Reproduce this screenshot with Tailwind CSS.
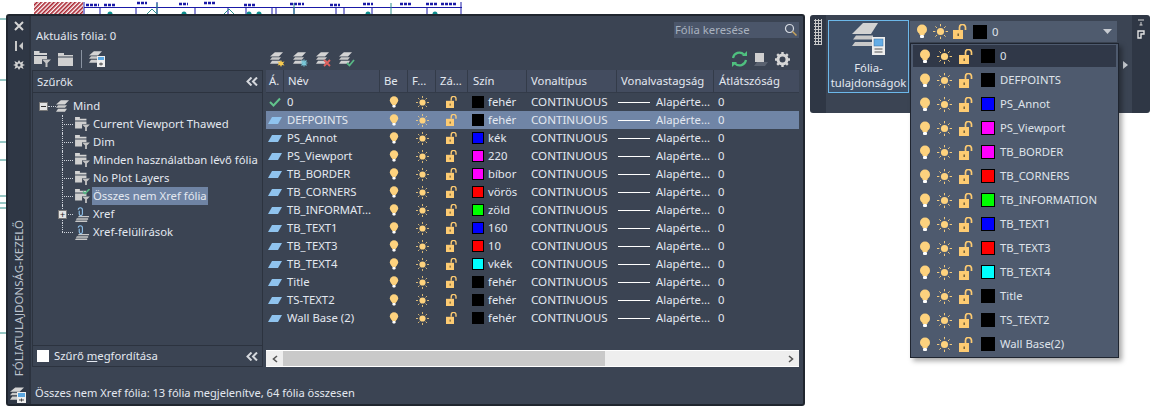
<!DOCTYPE html>
<html lang="en">
  <head>
    <meta charset="UTF-8" />
    <title>Fóliatulajdonság-kezelő</title>
    <script src="https://cdn.jsdelivr.net/npm/@tailwindcss/browser@4"></script>
  </head>
  <body class="bg-white font-['Noto_Sans',sans-serif] text-[11.3px] leading-[18px] text-[#e3e8f0] antialiased">
    <!-- Icon sprites -->
    <svg width="0" height="0" class="absolute">
      <defs>
        <pattern id="hatch" width="3" height="3" patternUnits="userSpaceOnUse" patternTransform="rotate(45)">
          <rect width="3" height="3" fill="#fff" />
          <rect width="1.6" height="3" fill="#a8202c" />
        </pattern>
        <symbol id="bulb" viewBox="0 0 12 15">
          <circle cx="6" cy="5.5" r="5" fill="#fdd27e" />
          <rect x="3.5" y="9" width="5" height="2" fill="#fdd27e" />
          <rect x="4" y="11" width="4" height="3" rx="1" fill="#fff" />
        </symbol>
        <symbol id="sun" viewBox="0 0 16 16">
          <circle cx="8" cy="8" r="3.8" fill="#fdd27e" />
          <path d="M8 0v2.5M8 13.5V16M0 8h2.5M13.5 8H16M2.5 2.5l1.7 1.7M11.8 11.8l1.7 1.7M2.5 13.5l1.7-1.7M11.8 4.2l1.7-1.7" stroke="#fdd27e" stroke-width="1" />
        </symbol>
        <symbol id="lock" viewBox="0 0 15 15">
          <rect x="0" y="6" width="10" height="9" fill="#fdcb72" />
          <rect x="4.5" y="9.5" width="1.4" height="2.5" fill="#6b5a35" />
          <path d="M6.5 6V3.5a3 3 0 0 1 6 0V6" fill="none" stroke="#fdcb72" stroke-width="1.7" />
        </symbol>
        <symbol id="stack" viewBox="0 0 16 14">
          <path d="M6 0h10l-5 5H0z" fill="#d4d4d4" />
          <path d="M2.500 6h11L11 9H0z" fill="#c8c8c8" />
          <path d="M2.500 10.500h11L11 14H0z" fill="#d0d0d0" />
        </symbol>
        <symbol id="filter" viewBox="0 0 17 16">
          <path d="M0 0h5.500v2H13v2H0z" fill="#d4d4d4" />
          <path d="M0 5h13v3H8v5H0z" fill="#cfcfcf" />
          <path d="M8 8.500h9l-3.500 3.500v4h-2v-4z" fill="#c4c4c4" />
        </symbol>
        <symbol id="xref" viewBox="0 0 16 16">
          <path d="M4 9.500h11v1.500H3zM2 12h12v1.500H1zM1 14.500h12V16H0z" fill="#c8c8c8" />
          <path d="M3.500 3a2.200 2.200 0 0 1 4.400 0v4.500a1.700 1.700 0 0 1-3.400 0V4" fill="none" stroke="#8fc1ea" stroke-width="1.200" />
        </symbol>
        <symbol id="chevrons" viewBox="0 0 12 9">
          <path d="M5.500.5L1.500 4.500l4 4M11 .5l-4 4 4 4" fill="none" stroke="#d5d8dd" stroke-width="2" />
        </symbol>
      </defs>
    </svg>

    <div class="relative w-[1165px] h-[412px] overflow-hidden bg-white">
      <!-- Drawing behind the palettes -->
      <svg class="absolute inset-0" width="1165" height="412">
        <rect x="34" y="2" width="49" height="12" fill="url(#hatch)" />
        <g stroke="#1a1aa6" fill="none">
          <path d="M84 7.500H462M84 2v12M100 7v7M136 7v7M157 2v12M195 7v7M228 7v7M246 7v7M272 7v7M276 7v7M294 7v7M336 7v7M344 7v7M372 7v7M427 7v7M461 2v12" />
          <path d="M86 5h13M104 5h11M137 3h10M179 4h9M204 3h11M244 5h12M290 4h14M330 5h10M363 4h10M400 4h11M426 4h11M441 4h16" stroke-width="2.500" stroke-dasharray="3 1" />
        </g>
        <g stroke="#2f8f8a" fill="none">
          <path d="M157 3v11M294 3v11M391 3v11M0 19h6M0 80h6M0 142h6M0 160h6M0 196h6M0 203h6M0 208h6M0 333h6" />
          <path d="M147 14l5-5 5 5M224 14l5-5 5 5" />
        </g>
        <g fill="#0d8f8f">
          <circle cx="110" cy="14" r="2.500" />
          <circle cx="184" cy="14" r="2.500" />
          <circle cx="249" cy="14" r="2.500" />
          <circle cx="259" cy="14" r="2.500" />
          <circle cx="368" cy="14" r="2.500" />
          <circle cx="435" cy="14" r="2.500" />
        </g>
      </svg>

      <!-- Layer properties manager palette -->
      <section class="absolute left-[6px] top-[14px] w-[799px] h-[392px] flex rounded-[3px] border-2 border-[#20262f] bg-[#3b4453]">
        <!-- Title strip -->
        <aside class="w-[21px] shrink-0 flex flex-col items-center bg-[#2f3745] text-[#cfd4dc]">
          <svg class="mt-[5px]" width="10" height="10" viewBox="0 0 10 10"><path d="M1 1l8 8M9 1l-8 8" stroke="#d5d5d5" stroke-width="2" /></svg>
          <svg class="mt-[10px]" width="10" height="10" viewBox="0 0 10 10"><rect x="1" y="0" width="2" height="10" fill="#c8c8c8" /><path d="M9 1v8L5 5z" fill="#c8c8c8" /></svg>
          <svg class="mt-[8px]" width="12" height="12" viewBox="0 0 12 12"><path d="M6 1l1.500 2.500L10.500 2 9.500 5 12 6 9.500 7l1 3-3-1.500L6 11 4.500 8.500 1.500 10l1-3L0 6l2.500-1-1-3 3 1.500z" fill="#d0d0d0" /><circle cx="6" cy="6" r="1.500" fill="#2f3745" /></svg>
          <div class="mt-auto mb-[10px] [writing-mode:vertical-rl] rotate-180 text-[11.500px] whitespace-nowrap text-[#bcc3ce]">FÓLIATULAJDONSÁG-KEZELŐ</div>
          <svg class="mb-[1px]" width="17" height="17" viewBox="0 0 17 17">
            <use href="#stack" x="0" y="1" width="14" height="13" />
            <rect x="7" y="6" width="9" height="11" fill="#eee" />
            <rect x="8" y="7" width="7" height="4" fill="#5aa6e0" />
            <path d="M9 14h5M11.500 12.500v3" stroke="#444" />
          </svg>
        </aside>

        <!-- Main content -->
        <div class="flex-1 min-w-0 flex flex-col border-l-2 border-[#2c333f]">
          <header class="h-[32px] shrink-0 flex items-end justify-between pl-[5px] pr-[4px] pb-[3px]">
            <span>Aktuális fólia: 0</span>
            <div class="relative w-[125px] h-[16px] mb-[7px] bg-[#4b566a] pl-px text-[#a9b2bf] leading-[16px]">
              Fólia keresése
              <svg class="absolute right-[1px] top-[1px]" width="14" height="14" viewBox="0 0 14 14"><circle cx="5.500" cy="5.500" r="4" fill="none" stroke="#d7dce3" stroke-width="1.200" /><path d="M8.500 8.500l4 4" stroke="#c9a35a" stroke-width="1.500" /></svg>
            </div>
          </header>

          <div class="h-[22px] shrink-0 flex items-center pl-[3px] pr-[4px]">
            <svg width="17" height="16"><use href="#filter" width="17" height="16" /></svg>
            <svg class="ml-[7px]" width="15" height="13" viewBox="0 0 15 13"><path d="M0 0h6v2h9v1.500H0zM0 4.500h15V13H0z" fill="#d0d0d0" /></svg>
            <div class="ml-[8px] w-px h-[18px] bg-[#8a93a1]"></div>
            <svg class="ml-[7px]" width="17" height="17" viewBox="0 0 17 17">
              <use href="#stack" x="0" y="0" width="13" height="12" />
              <rect x="8" y="5" width="8" height="11" fill="#eee" />
              <rect x="9" y="6" width="6" height="3" fill="#5aa6e0" />
              <path d="M10 13h4M12 11.500v3" stroke="#444" />
            </svg>
            <!-- New / delete / set current -->
            <div class="ml-[164px] flex items-center gap-[7px]">
              <svg width="16" height="15" viewBox="0 0 16 15"><use href="#stack" width="13" height="12" /><path d="M11 8l1 2 2.500-.5L13 11.500l1.500 2-2.500-.5-1 2-1-2-2.500.5L9 11.500 7.500 9.500l2.500.5z" fill="#f5c94f" /></svg>
              <svg width="16" height="15" viewBox="0 0 16 15"><use href="#stack" width="13" height="12" /><path d="M11 7.500v7M7.500 11h7M8.500 8.500l5 5M13.500 8.500l-5 5" stroke="#79c8d8" stroke-width="1.200" /></svg>
              <svg width="16" height="15" viewBox="0 0 16 15"><use href="#stack" width="13" height="12" /><path d="M8 8l6 6M14 8l-6 6" stroke="#e2625e" stroke-width="1.800" /></svg>
              <svg width="16" height="15" viewBox="0 0 16 15"><use href="#stack" width="13" height="12" /><path d="M8 11l2.500 2.500L15 8" fill="none" stroke="#58b784" stroke-width="1.800" /></svg>
            </div>
            <div class="ml-auto flex items-center gap-[6px] mr-[9px]">
              <svg width="17" height="16" viewBox="0 0 17 16"><path d="M2 7a6.500 6.500 0 0 1 11-3.500M15 9a6.500 6.500 0 0 1-11 3.500" fill="none" stroke="#4fc07f" stroke-width="2.200" /><path d="M11 5h5V0zM6 11H1v5z" fill="#4fc07f" /></svg>
              <svg width="15" height="15" viewBox="0 0 15 15"><rect x="1" y="1" width="9" height="9" fill="#cfcfcf" /><path d="M3 10h11l-3 4H0z" fill="#5a6270" /></svg>
              <svg width="15" height="15" viewBox="0 0 15 15"><circle cx="7.500" cy="7.500" r="4.500" fill="none" stroke="#d6d6d6" stroke-width="3" /><path d="M7.500 0v3M7.500 12v3M0 7.500h3M12 7.500h3M2.200 2.200l2 2M10.800 10.800l2 2M2.200 12.800l2-2M10.800 4.200l2-2" stroke="#d6d6d6" stroke-width="2.400" /></svg>
            </div>
          </div>

          <div class="h-[298px] shrink-0 flex">
            <!-- Filter tree -->
            <div class="ml-[1px] w-[231px] h-[297px] shrink-0 flex flex-col border border-[#2c333f]">
              <div class="h-[22px] shrink-0 flex items-center justify-between pl-[4px] pr-[4px] border-b border-[#2c333f]">
                <span>Szűrők</span>
                <svg width="12" height="9"><use href="#chevrons" width="12" height="9" /></svg>
              </div>
              <div id="tree" class="flex-1 pt-[4px]"></div>
              <div class="h-[21px] shrink-0 flex items-center justify-between pl-[4px] pr-[4px] border-t border-[#2c333f]">
                <label class="flex items-center gap-[5px]">
                  <span class="w-[12px] h-[12px] bg-white"></span>
                  <span>Szűrő <u>m</u>egfordítása</span>
                </label>
                <svg width="12" height="9"><use href="#chevrons" width="12" height="9" /></svg>
              </div>
            </div>

            <!-- Layer table -->
            <div class="ml-[3px] w-[533px] shrink-0 flex flex-col">
              <div class="h-[23px] shrink-0 flex bg-[#434c5f] border-b border-[#333b49] leading-[22px]">
                <div class="w-[18px] pl-[3px] border-r border-[#333b49]">Á.</div>
                <div class="w-[96px] pl-[4px] border-r border-[#333b49]">Név</div>
                <div class="w-[28px] pl-[4px] border-r border-[#333b49]">Be</div>
                <div class="w-[28px] pl-[4px] border-r border-[#333b49]">F...</div>
                <div class="w-[32px] pl-[4px] border-r border-[#333b49]">Zá...</div>
                <div class="w-[59px] pl-[5px] border-r border-[#333b49]">Szín</div>
                <div class="w-[90px] pl-[4px] border-r border-[#333b49]">Vonaltípus</div>
                <div class="w-[97px] pl-[4px] border-r border-[#333b49]">Vonalvastagság</div>
                <div class="flex-1 pl-[5px]">Átlátszóság</div>
              </div>
              <div id="rows" class="h-[257px] shrink-0"></div>
              <!-- Horizontal scrollbar -->
              <div class="h-[17px] shrink-0 flex bg-[#eeeeee] border-y border-white">
                <div class="w-[17px] flex items-center justify-center">
                  <svg width="6" height="8" viewBox="0 0 6 8"><path d="M5 1L1.500 4 5 7" fill="none" stroke="#555" stroke-width="1.600" /></svg>
                </div>
                <div class="w-[322px] bg-[#c9c9c9]"></div>
                <div class="flex-1"></div>
                <div class="w-[17px] flex items-center justify-center">
                  <svg width="6" height="8" viewBox="0 0 6 8"><path d="M1 1l3.500 3L1 7" fill="none" stroke="#555" stroke-width="1.600" /></svg>
                </div>
              </div>
            </div>
          </div>

          <footer class="flex-1 flex items-end pl-[4px] pb-[2px] text-[11.1px]">
            Összes nem Xref fólia: 13 fólia megjelenítve, 64 fólia összesen
          </footer>
        </div>
      </section>

      <!-- Ribbon panel -->
      <section class="absolute left-[810px] top-[15px] w-[340px] h-[98px] flex rounded-[3px] bg-[#2f3745]">
        <div class="w-[16px] shrink-0 pt-[4px] pl-[4px]">
          <div class="w-[8px] h-[26px] bg-[radial-gradient(#c8c8c8_1px,transparent_1.200px)] bg-[length:3px_3px]"></div>
        </div>
        <div class="w-[306px] shrink-0 bg-[#3b4453] pl-[2px] pt-[5px] flex items-start">
          <button class="w-[81px] h-[73px] flex flex-col items-center border border-[#6cb8ea] bg-[#3f5068] leading-[15px]">
            <svg class="mt-[2px] mb-[3px]" width="34" height="34" viewBox="0 0 34 34">
              <path d="M11 0h15l-7 11H0z" fill="#d2d2d2" />
              <path d="M4 12.500h17v4H1zM3 19h17v4H0z" fill="#c8c8c8" />
              <rect x="20" y="14" width="13" height="18" fill="#eeeeee" />
              <rect x="22" y="16" width="9" height="7" fill="#64ade6" stroke="#3b6f9e" stroke-width=".5" />
              <path d="M22.500 26h8M22.500 29h8" stroke="#555" />
            </svg>
            <span>Fólia-</span>
            <span>tulajdonságok</span>
          </button>
          <div class="ml-[1px] mt-px w-[207px] h-[21px] flex items-center bg-[#4f5b6e] pl-[6px]">
            <svg width="12" height="15"><use href="#bulb" width="12" height="15" /></svg>
            <svg class="ml-[5px]" width="15" height="15"><use href="#sun" width="15" height="15" /></svg>
            <svg class="ml-[5px]" width="15" height="15"><use href="#lock" width="15" height="15" /></svg>
            <span class="ml-[5px] w-[14px] h-[14px] bg-black"></span>
            <span class="ml-[5px] text-[#dfe3ea]">0</span>
            <svg class="ml-auto mr-[5px]" width="9" height="5" viewBox="0 0 9 5"><path d="M0 0h9L4.500 5z" fill="#c8ccd2" /></svg>
          </div>
          <svg class="absolute left-[313px] top-[46px]" width="5" height="8" viewBox="0 0 5 8"><path d="M0 0l5 4-5 4z" fill="#c8ccd2" /></svg>
        </div>
        <div class="flex-1 flex flex-col items-center pt-[4px] gap-[3px]">
          <svg width="8" height="8" viewBox="0 0 8 8"><path d="M1 1h6M4 3v3M2.500 6h3" stroke="#d5d5d5" /></svg>
          <svg width="8" height="9" viewBox="0 0 8 9"><path d="M1 1h6v3H4v4H1z" fill="none" stroke="#e3e3e3" stroke-width="1.400" /></svg>
        </div>
      </section>

      <!-- Layer dropdown -->
      <div id="dropdown" class="absolute left-[910px] top-[43px] w-[209px] h-[315px] pt-[1px] px-[2px] bg-[#4e5a6e] border border-[#1f2530] shadow-[3px_3px_5px_rgba(0,0,0,0.35)]"></div>
    </div>

    <script>
      const layers = [
        { name: "0", color: "#000000", label: "fehér", current: true, drop: "0" },
        { name: "DEFPOINTS", color: "#000000", label: "fehér", selected: true, drop: "DEFPOINTS" },
        { name: "PS_Annot", color: "#0000ff", label: "kék", drop: "PS_Annot" },
        { name: "PS_Viewport", color: "#ff00ff", label: "220", drop: "PS_Viewport" },
        { name: "TB_BORDER", color: "#ff00ff", label: "bíbor", drop: "TB_BORDER" },
        { name: "TB_CORNERS", color: "#ff0000", label: "vörös", drop: "TB_CORNERS" },
        { name: "TB_INFORMAT...", color: "#00ff00", label: "zöld", drop: "TB_INFORMATION" },
        { name: "TB_TEXT1", color: "#0000ff", label: "160", drop: "TB_TEXT1" },
        { name: "TB_TEXT3", color: "#ff0000", label: "10", drop: "TB_TEXT3" },
        { name: "TB_TEXT4", color: "#00ffff", label: "vkék", drop: "TB_TEXT4" },
        { name: "Title", color: "#000000", label: "fehér", drop: "Title" },
        { name: "TS-TEXT2", color: "#000000", label: "fehér", drop: "TS_TEXT2" },
        { name: "Wall Base (2)", color: "#000000", label: "fehér", drop: "Wall Base(2)" },
      ];

      const filters = [
        { name: "Current Viewport Thawed" },
        { name: "Dim" },
        { name: "Minden használatban lévő fólia" },
        { name: "No Plot Layers" },
        { name: "Összes nem Xref fólia", selected: true },
        { name: "Xref", xref: true, plus: true },
        { name: "Xref-felülírások", xref: true, last: true },
      ];

      const icon = (id, w, h) => `<svg width="${w}" height="${h}"><use href="#${id}" width="${w}" height="${h}" /></svg>`;

      document.getElementById("rows").innerHTML = layers.map((l) => `
        <div class="h-[18px] flex items-center whitespace-nowrap ${l.selected ? "bg-[#7085a6]" : ""}">
          <div class="w-[18px] flex justify-center">
            ${l.current
              ? `<svg width="12" height="10" viewBox="0 0 12 10"><path d="M1 5l3.500 3.500L11 1.500" fill="none" stroke="#62c48c" stroke-width="2" /></svg>`
              : `<svg width="14" height="7" viewBox="0 0 14 7"><path d="M4 0h10l-4 7H0z" fill="#8fc3ee" /></svg>`}
          </div>
          <div class="w-[96px] pl-[3px]">${l.name}</div>
          <div class="w-[28px] pl-[9px]">${icon("bulb", 10, 14)}</div>
          <div class="w-[28px] pl-[8px]">${icon("sun", 13, 13)}</div>
          <div class="w-[32px] pl-[10px]">${icon("lock", 12, 12)}</div>
          <div class="w-[59px] pl-[4px] flex items-center">
            <span class="w-[12px] h-[12px] border border-black mr-[4px]" style="background:${l.color}"></span>${l.label}
          </div>
          <div class="w-[90px] pl-[4px] text-[11.6px]">CONTINUOUS</div>
          <div class="w-[97px] pl-[1px] flex items-center">
            <span class="w-[32px] h-px bg-white mr-[6px]"></span>Alapérte...
          </div>
          <div class="flex-1 pl-[4px]">0</div>
        </div>`).join("");

      document.getElementById("dropdown").innerHTML = layers.map((l, i) => `
        <div class="flex items-center pl-[6px] ${i === 0 ? "h-[22px] mb-[1px] bg-[#303848]" : "h-[24px]"}">
          ${icon("bulb", 12, 15)}
          <span class="ml-[6px] flex">${icon("sun", 15, 15)}</span>
          <span class="ml-[7px] flex">${icon("lock", 15, 15)}</span>
          <span class="ml-[7px] w-[14px] h-[14px] border border-black" style="background:${l.color}"></span>
          <span class="ml-[5px] text-[#dfe3ea]">${l.drop}</span>
        </div>`).join("");

      const folder = (f) => {
        if (f.xref) return icon("xref", 15, 15);
        if (f.selected) {
          // active filter: folder with a green check on its top right
          return `<svg width="15" height="14" viewBox="0 0 15 14"><use href="#filter" width="15" height="14" /><path d="M8 2.500l2 2L14.500 0" fill="none" stroke="#58b784" stroke-width="1.600" /></svg>`;
        }
        return icon("filter", 15, 14);
      };

      document.getElementById("tree").innerHTML = `
        <div class="h-[18px] flex items-center pl-[6px] relative">
          <span class="shrink-0 w-[9px] h-[9px] bg-[#e4e4e4] border border-[#777] flex items-center justify-center"><span class="w-[5px] h-px bg-[#333]"></span></span>
          <span class="shrink-0 w-[8px] border-t border-dotted border-[#cfd4dc]"></span>
          ${icon("stack", 13, 12)}
          <span class="ml-[4px]">Mind</span>
        </div>` + filters.map((f) => `
        <div class="h-[18px] flex items-center pl-[29px] relative whitespace-nowrap">
          <span class="absolute left-[29px] top-0 ${f.last ? "h-[9px]" : "h-[18px]"} border-l border-dotted border-[#cfd4dc]"></span>
          <span class="shrink-0 w-[11px] border-t border-dotted border-[#cfd4dc]"></span>
          ${f.plus ? `<span class="absolute left-[25px] top-[5px] w-[9px] h-[9px] bg-[#e4e4e4] border border-[#777] flex items-center justify-center text-[#222] text-[9px] leading-[7px]">+</span>` : ""}
          <span class="shrink-0 ml-[2px] w-[15px] flex">${folder(f)}</span>
          <span class="ml-[2px] px-[1px] ${f.selected ? "bg-[#6f84a4]" : ""}">${f.name}</span>
        </div>`).join("");
    </script>
  </body>
</html>
